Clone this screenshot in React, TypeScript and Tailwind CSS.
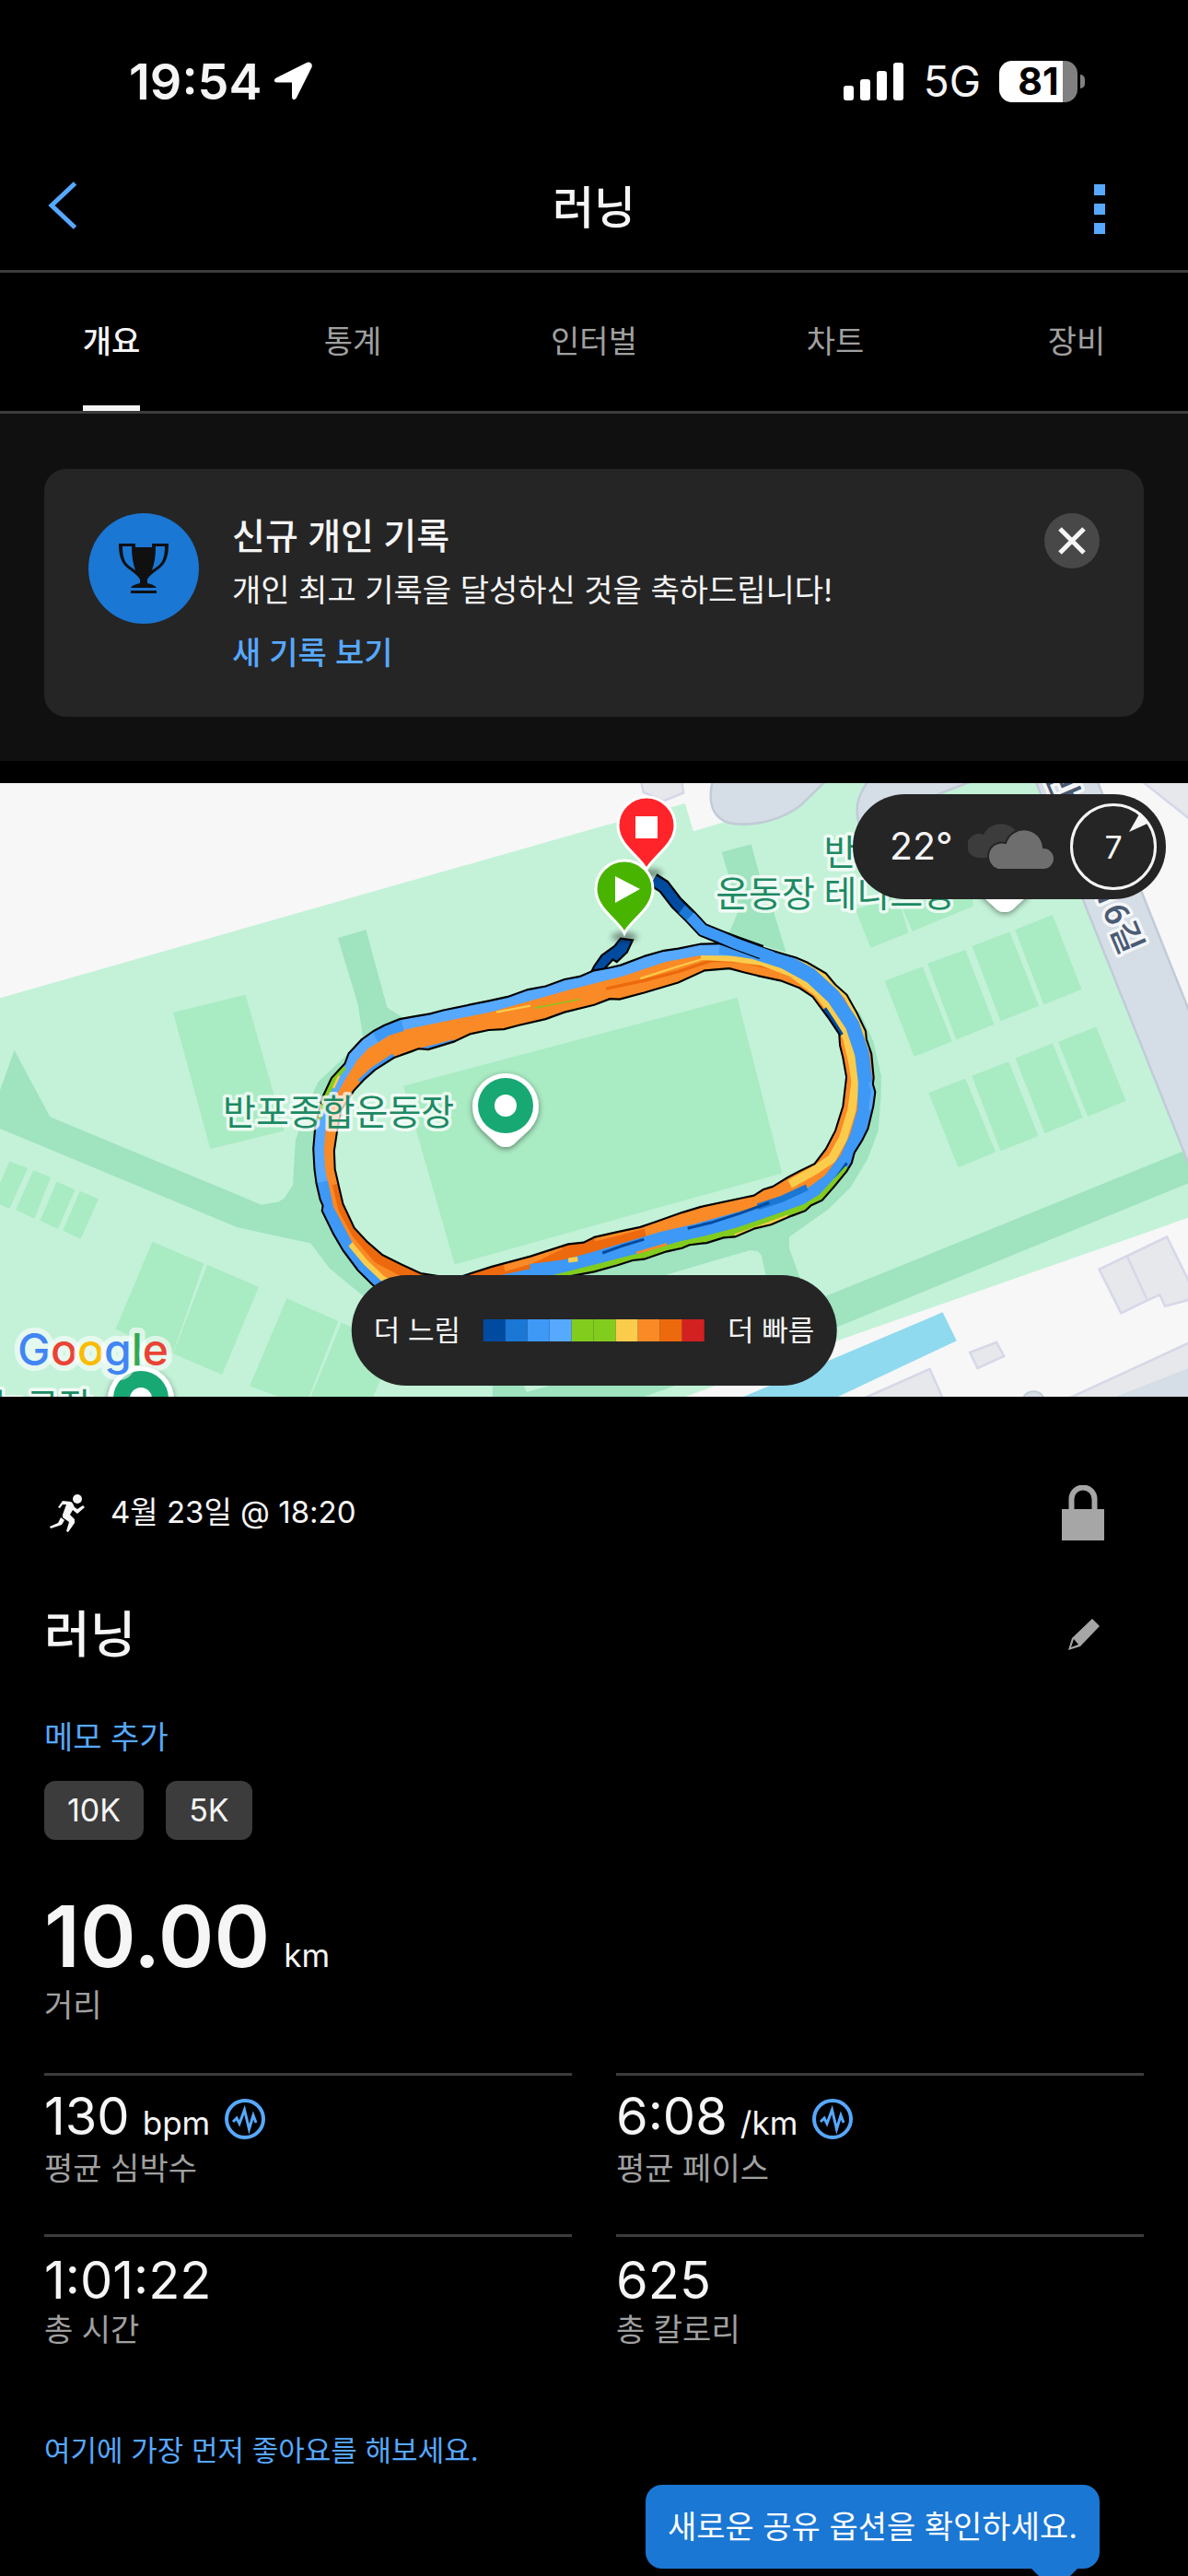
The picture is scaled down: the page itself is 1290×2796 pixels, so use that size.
import type { ReactNode } from "react";

const OUTER =
  "M1055 605 L1085 600 L1135 592 L1170 583 L1290 560 L1340 550 L1390 533 L1440 524 L1490 507 L1530 500 L1568 485 L1610 478 L1638 472 L1700 450 L1748 437 L1790 431 L1848 420 L1930 418 L1970 424 L2010 428 L2070 445 L2100 453 L2130 465 L2180 492 L2205 520 L2235 545 L2262 590 L2285 635 L2287 655 L2300 690 L2306 750 L2304 765 L2310 785 L2305 820 L2300 840 L2291 875 L2275 905 L2255 935 L2248 960 L2235 980 L2200 1020 L2170 1052 L2140 1065 L2125 1078 L2090 1090 L2035 1112 L1990 1122 L1940 1142 L1910 1144 L1865 1157 L1820 1162 L1800 1170 L1760 1178 L1700 1197 L1670 1200 L1630 1212 L1568 1228 L1500 1240 L1200 1320 L1100 1320 L985 1262 L945 1225 L905 1175 L880 1135 L850 1078 L852 1065 L845 1050 L835 1010 L830 975 L827 925 L832 870 L850 800 L875 750 L910 715 L920 690 L955 655 L985 635 L1015 620 Z";
const INNER =
  "M1085 685 L1105 678 L1130 680 L1200 660 L1240 642 L1290 632 L1330 630 L1370 620 L1440 605 L1490 588 L1568 570 L1610 555 L1635 556 L1700 540 L1790 515 L1860 485 L1925 480 L1965 490 L2000 498 L2060 510 L2110 528 L2145 550 L2185 600 L2215 642 L2217 670 L2225 700 L2234 748 L2225 820 L2205 880 L2180 925 L2150 962 L2110 980 L2080 995 L2040 1018 L2015 1025 L1990 1040 L1965 1045 L1850 1068 L1800 1082 L1730 1105 L1690 1118 L1630 1130 L1568 1143 L1540 1156 L1500 1160 L1400 1190 L1300 1215 L1200 1245 L1110 1232 L1060 1210 L1010 1187 L970 1155 L935 1120 L905 1060 L895 1020 L884 975 L882 930 L890 880 L900 830 L935 780 L960 755 L990 730 L1040 700 Z";

const LEFT_COURTS = [
  "457,589 648,545 750,880 555,925",
  "25,956 73,973 25,1073 0,1062 0,1010",
  "88,978 134,995 91,1097 42,1075",
  "150,1006 198,1026 153,1123 106,1102",
  "211,1029 260,1049 213,1147 166,1127",
  "402,1154 538,1208 455,1432 305,1370",
  "547,1211 683,1266 586,1482 457,1430",
  "757,1294 893,1350 806,1560 659,1510",
  "901,1354 1010,1395 1010,1480 975,1560 810,1560",
  "1065,770 1946,552 2064,985 1200,1210",
];

const RIGHT_COURTS = [
  "767,511 867,476 945,660 845,698",
  "880,468 980,434 1056,618 956,656",
  "998,425 1097,390 1174,573 1073,610",
  "1111,385 1210,348 1287,532 1187,569",
  "883,787 980,752 1060,933 961,971",
  "997,745 1094,710 1173,893 1073,930",
  "1112,701 1210,665 1290,848 1190,887",
  "1225,661 1325,624 1404,807 1303,845",
  "690,335 800,300 830,392 730,429",
  "808,320 1000,290 1000,327 840,388",
];

const LEGEND = [
  "bg-[#004b9f]",
  "bg-[#1a77d4]",
  "bg-[#3d98f6]",
  "bg-[#57a8ff]",
  "bg-[#82cc1e]",
  "bg-[#82cc1e]",
  "bg-[#fbcc4b]",
  "bg-[#fa8a26]",
  "bg-[#ec690d]",
  "bg-[#d32020]",
];

function PlacePin({ x, y }: { x: number; y: number }) {
  return (
    <g transform={`translate(${x} ${y})`}>
      <path
        d="M0 45 C-5 45 -8 43 -12 39 L-26 26 A36 36 0 1 1 26 26 L12 39 C8 43 5 45 0 45 Z"
        fill="#fff"
        filter="url(#pinShadow)"
      />
      <circle r="30" fill="#18a874" />
      <circle r="12" fill="#fff" />
    </g>
  );
}

function RouteMap() {
  const halo = {
    stroke: "#fff",
    strokeOpacity: 0.75,
    strokeWidth: 7,
    strokeLinejoin: "round" as const,
    paintOrder: "stroke",
  };
  return (
    <svg
      viewBox="0 0 1290 666"
      preserveAspectRatio="xMidYMid slice"
      className="block h-[666px] w-full"
      role="img"
      aria-label="러닝 경로 지도"
    >
      <defs>
        <filter id="pinShadow" x="-30%" y="-30%" width="160%" height="160%">
          <feDropShadow dx="0" dy="2" stdDeviation="3" floodColor="#000" floodOpacity="0.45" />
        </filter>
        <filter id="soft" x="-50%" y="-100%" width="200%" height="300%">
          <feGaussianBlur stdDeviation="3" />
        </filter>
        <clipPath id="band">
          <path d={`${OUTER} ${INNER}`} clipRule="evenodd" />
        </clipPath>
      </defs>
      <rect width="1290" height="666" fill="#f7f7f7" />
      <g transform="scale(0.4114 0.4401) translate(0 -23)">
        <polygon
          points="0,553 1568,135 1808,73 1830,142 1908,120 2100,23 2740,23 3136,945 3136,1095 2210,1398 1799,1540 0,1540"
          fill="#c3f2d8"
        />
        <g fill="#9fe3bf">
          <polygon points="3120,932 3136,937 3136,1010 2210,1364 1690,1540 1300,1540 1300,1500 1378,1500 1390,1525 1900,1390 2180,1288" />
          <polygon points="0,780 38,682 132,846 690,1063 735,1056 750,1047 773,1015 780,905 805,830 840,760 925,685 1000,700 1000,1290 955,1285 870,1220 820,1158 625,1118 0,875" />
          <polygon points="892,405 966,385 1022,577 1085,615 960,660 945,570" />
          <polygon points="1905,193 1983,174 2010,268 2030,285 2045,350 2075,440 1920,400 1935,370 1948,340 1938,300" />
          <polygon points="2200,530 2270,590 2305,660 2326,745 2325,800 2318,880 2290,950 2245,1020 2185,1075 2083,1142 2083,1170 2110,1240 2180,1400 2060,1400 2010,1188 2000,1177 1980,1175 1760,1235 1300,1340 1100,1360 950,1280 1100,1200 2000,1000 2200,800" />
        </g>
        <path d={INNER} fill="#c3f2d8" />
        <g fill="#a9ebc3">
          {LEFT_COURTS.map((p) => (
            <polygon key={p} points={p} />
          ))}
        </g>
        <g transform="translate(1568 0)">
          <g fill="#a9ebc3">
            {RIGHT_COURTS.map((p) => (
              <polygon key={p} points={p} />
            ))}
          </g>
          <g fill="#d5dde6" stroke="#c1ccd6" strokeWidth="6">
            <path d="M315 10 C300 60 305 108 360 122 C430 132 500 110 545 78 L620 10 Z" />
            <path d="M730 10 C688 60 690 90 700 130 L860 68 L1020 10 Z" />
            <polygon points="1162,10 1325,10 1590,630 1590,1010" />
          </g>
          <g fill="#e6e8ec" stroke="#d6d8e8" strokeWidth="6">
            <polygon points="122,10 130,45 183,67 236,47 230,10" />
            <polygon points="1333,1222 1512,1142 1590,1290 1568,1298 1507,1313 1493,1285 1462,1298 1391,1330" />
            <path d="M1407 1190 L1460 1298" />
            <polygon points="992,1427 1062,1402 1082,1436 1012,1466" />
            <polygon points="700,1545 886,1468 925,1550" />
            <polygon points="1230,1550 1590,1395 1590,1550" />
            <polygon points="1435,10 1590,125 1590,10" />
          </g>
          <polygon points="1340,1550 1590,1458 1590,1550" fill="#d5dde6" />
          <ellipse cx="1160" cy="1545" rx="28" ry="22" fill="#d5dde6" stroke="#c1ccd6" strokeWidth="4" />
          <polygon points="920,1328 957,1398 645,1536 620,1550 360,1550" fill="#8fdaef" />
        </g>
        <path
          d="M1550 510 L1568 475 L1588 448 L1622 425 L1638 406 L1670 410 L1655 440 L1628 464 L1618 458 L1598 478 L1592 500 Z"
          fill="#004b9f"
          stroke="#000"
          strokeWidth="5"
        />
        <g clipPath="url(#band)" fill="none" strokeLinejoin="round">
          <rect x="800" y="380" width="1550" height="980" fill="#fa8a26" />
          <path d="M1060 698 L1100 686 L1200 662 M950 760 L985 730 L1040 696" stroke="#3d98f6" strokeWidth="14" />
          <path d="M1200 1245 L1300 1215 L1400 1190 L1500 1165 L1568 1150 L1700 1118" stroke="#ec690d" strokeWidth="60" />
          <path d="M1568 1140 L1640 1124 L1720 1104 M1480 1160 L1400 1196 L1330 1215" stroke="#fa8a26" strokeWidth="26" />
          <path d="M895 1010 L910 1070 L945 1130 L1000 1190 L1110 1245" stroke="#ec690d" strokeWidth="36" />
          <path d="M1600 530 L1700 510 L1790 488 L1880 460 L1960 462 L2040 480" stroke="#ec690d" strokeWidth="8" />
          <path
            d="M1850 448 L1930 452 L2010 462 L2090 490 L2160 540 L2200 590 L2235 650 L2250 710 L2258 760 L2248 830 L2225 900 L2195 950 L2150 978 L2085 1012"
            stroke="#fbcc4b"
            strokeWidth="22"
          />
          <path d="M1690 505 L1780 478 L1850 458 M1310 588 L1400 572" stroke="#fbcc4b" strokeWidth="5" />
          <path d="M1410 578 L1530 556" stroke="#82cc1e" strokeWidth="3" />
          <path d="M2175 580 L2195 608 L2220 645" stroke="#004b9f" strokeWidth="14" />
          <path d="M2040 445 L2130 465 L2180 490 L2240 545 L2286 635 L2300 680" stroke="#fbcc4b" strokeWidth="26" />
          <path
            d="M1010 1290 L945 1225 L905 1175 L850 1078 L830 975 L827 925 L832 870 L850 800 L890 735 L920 690 L955 655 L1015 620 L1055 605 L1290 560 L1490 507 L1638 472 L1748 437 L1848 420 L1950 421"
            stroke="#57a8ff"
            strokeWidth="56"
          />
          <path d="M1010 1290 L945 1225 L905 1175 L850 1078 L835 1010" stroke="#3d98f6" strokeWidth="62" />
          <path d="M925 1160 L965 1205 L1010 1245 L1040 1262" stroke="#fbcc4b" strokeWidth="14" />
          <path d="M985 640 L1015 622 L1060 610" stroke="#3d98f6" strokeWidth="50" />
          <path d="M836 850 L852 800 L880 750 L905 720" stroke="#82cc1e" strokeWidth="22" />
          <path d="M880 775 L895 745" stroke="#fbcc4b" strokeWidth="6" />
          <path
            d="M1900 425 L1990 438 L2070 462 L2140 498 L2200 550 L2250 620 L2275 690 L2284 760 L2282 830 L2262 895 L2235 950 L2190 1005 L2125 1050 L2030 1080 L1940 1102 L1840 1128 L1740 1150 L1640 1178 L1568 1198 L1400 1240 L1300 1260"
            stroke="#3d98f6"
            strokeWidth="38"
          />
          <path d="M1400 1222 L1500 1210 L1600 1200" stroke="#3d98f6" strokeWidth="26" />
          <path d="M2130 1020 L2060 1050 L2000 1068" stroke="#1a77d4" strokeWidth="16" />
          <path d="M2030 1058 L1950 1085 L1880 1106 L1815 1121 M1700 1148 L1640 1165 L1590 1182 M2235 960 L2205 1000" stroke="#004b9f" strokeWidth="7" />
          <path
            d="M2240 975 L2170 1046 L2125 1072 L2035 1102 L1940 1132 L1865 1150 L1800 1163 L1700 1190 L1568 1222 L1450 1250"
            stroke="#82cc1e"
            strokeWidth="22"
          />
          <path d="M2080 1092 L2030 1110 L1940 1140" stroke="#fbcc4b" strokeWidth="10" />
          <path d="M1760 1160 L1680 1182" stroke="#fa8a26" strokeWidth="6" />
          <path d="M1500 1200 L1525 1197" stroke="#fbcc4b" strokeWidth="12" />
          <path d="M2298 760 L2305 780 L2298 830" stroke="#57a8ff" strokeWidth="12" />
        </g>
        <path d={OUTER} fill="none" stroke="#000" strokeWidth="5" strokeLinejoin="round" />
        <path d={INNER} fill="none" stroke="#000" strokeWidth="5" strokeLinejoin="round" />
        <path d="M1725 262 L1752 278 L1785 318 L1820 350 L1855 385 L1900 402 L1945 418 L2010 440" fill="none" stroke="#000" strokeWidth="36" />
        <path d="M1725 262 L1752 278 L1785 318 L1808 340" fill="none" stroke="#004b9f" strokeWidth="26" />
        <path d="M1800 334 L1828 358" fill="none" stroke="#1a77d4" strokeWidth="26" />
        <path d="M1822 352 L1855 385 L1900 402 L1945 420 L2040 452" fill="none" stroke="#3d98f6" strokeWidth="27" />
      </g>
      <g className="font-['Roboto','Noto_Sans_CJK_KR',sans-serif] text-[39px]" fill="#1d8a63" {...halo}>
        <text x="242" y="371">반포종합운동장</text>
        <text x="1038" y="89" textAnchor="end">반포종합</text>
        <text x="1038" y="134" textAnchor="end">운동장 테니스장</text>
        <text x="100" y="690" textAnchor="end">농구장</text>
      </g>
      <text
        transform="translate(1218 188) rotate(67)"
        textAnchor="end"
        fill="#4b5b74"
        className="font-['Roboto','Noto_Sans_CJK_KR',sans-serif] text-[37px] font-medium"
        {...halo}
      >
        반포대로16길
      </text>
      <PlacePin x={549} y={350} />
      <PlacePin x={153} y={668} />
      <PlacePin x={1091} y={95} />
      <text
        x="19"
        y="632"
        className="font-['Inter',sans-serif] text-[48px] font-medium"
        stroke="#fff"
        strokeOpacity="0.6"
        strokeWidth="12"
        strokeLinejoin="round"
        paintOrder="stroke"
      >
        <tspan fill="#4285f4">G</tspan>
        <tspan fill="#ea4335">o</tspan>
        <tspan fill="#fbbc05">o</tspan>
        <tspan fill="#4285f4">g</tspan>
        <tspan fill="#34a853">l</tspan>
        <tspan fill="#ea4335">e</tspan>
      </text>
      <ellipse cx="706" cy="98" rx="13" ry="5" fill="#000" opacity="0.4" filter="url(#soft)" />
      <path
        d="M702 94 C696 80 671 68 671 46 A31 31 0 1 1 733 46 C733 68 708 80 702 94 Z"
        fill="#ff2429"
        stroke="#fff"
        strokeWidth="3"
      />
      <rect x="690" y="36" width="24" height="24" fill="#fff" />
      <ellipse cx="678" cy="167" rx="14" ry="5" fill="#000" opacity="0.4" filter="url(#soft)" />
      <path
        d="M678 163 C672 149 647 137 647 115 A31 31 0 1 1 709 115 C709 137 684 149 678 163 Z"
        fill="#48b400"
        stroke="#fff"
        strokeWidth="3"
      />
      <path d="M668 101 L695 115 L668 130 Z" fill="#fff" />
    </svg>
  );
}

function PulseIcon() {
  return (
    <svg viewBox="0 0 44 44" className="size-11" fill="none" stroke="#57a8ff" aria-hidden="true">
      <circle cx="22" cy="22" r="20" strokeWidth="4" />
      <path d="M9 25 L13 21 L16 27 L21.500 12 L26.500 33 L31 18 L34 26" strokeWidth="3" />
    </svg>
  );
}

function Metric({ value, unit, label, pulse }: { value: string; unit?: string; label: string; pulse?: boolean }) {
  return (
    <div className="h-[175px] border-t-[3px] border-[#3c3c3c] pt-[17px]">
      <div className="flex h-[60px] items-center">
        <div className="flex items-baseline gap-3.5 leading-[60px]">
          <span className="text-[56px]">{value}</span>
          {unit && <span className="text-[35px]">{unit}</span>}
        </div>
        {pulse && (
          <button type="button" aria-label={`${label} 차트`} className="ml-4">
            <PulseIcon />
          </button>
        )}
      </div>
      <div className="text-[34px] leading-[48px] text-[#a0a0a0]">{label}</div>
    </div>
  );
}

function Tab({ children, active }: { children: ReactNode; active?: boolean }) {
  return (
    <button
      type="button"
      role="tab"
      aria-selected={!!active}
      className={
        active
          ? "flex w-32 justify-center font-medium text-[#f5f5f5]"
          : "flex w-32 justify-center text-[#a0a0a0]"
      }
    >
      <span className={active ? "h-[150px] border-b-[6px] border-[#f5f5f5] leading-[150px]" : "leading-[150px]"}>
        {children}
      </span>
    </button>
  );
}

function StatusBar() {
  return (
    <div className="flex h-[157px] items-center justify-between pt-[19px] pr-[112px] pl-[140px]">
      <div className="flex items-center gap-3">
        <span className="text-[54px] font-semibold">19:54</span>
        <svg viewBox="0 0 42 42" className="size-[42px]" fill="#fff" aria-hidden="true">
          <path d="M40.500 1.500 C42 3 42 4 41.500 6 L25 39 C23.500 42 20 42 20 38 L20 22.500 L4 22.500 C0 22.500 0 19 3 17.500 L36 1 C38 0 39.500 .5 40.500 1.500 Z" />
        </svg>
      </div>
      <div className="flex items-center">
        <svg viewBox="0 0 66 42" className="h-[42px] w-[66px]" fill="#fff" aria-hidden="true">
          <rect x="0" y="26" width="11" height="16" rx="3" />
          <rect x="18" y="19" width="11" height="23" rx="3" />
          <rect x="36" y="10" width="11" height="32" rx="3" />
          <rect x="54" y="1" width="11" height="41" rx="3" />
        </svg>
        <span className="ml-[21px] text-[46px]">5G</span>
        <div className="ml-[20px] flex items-center gap-[3px]">
          <div className="flex h-[45px] w-[85px] items-center justify-center rounded-[14px] bg-[linear-gradient(to_right,#fff_81%,#808080_81%)] text-[41px] leading-[45px] font-bold text-black">
            81
          </div>
          <div className="h-[15px] w-[5px] rounded-r-full bg-[#808080]" />
        </div>
      </div>
    </div>
  );
}

export default function App() {
  return (
    <main className="min-h-screen w-full overflow-hidden bg-black font-['Inter','Noto_Sans_CJK_KR',sans-serif] text-[#f5f5f5]">
      <StatusBar />
      <header className="grid h-[139px] grid-cols-[1fr_auto_1fr] items-center border-b-[3px] border-[#3c3c3c] px-[52px]">
        <button type="button" aria-label="뒤로" className="justify-self-start pb-1">
          <svg viewBox="0 0 32 52" className="h-[52px] w-8" fill="none" stroke="#57a8ff" strokeWidth="5" aria-hidden="true">
            <path d="M29.500 2 L4 26 L29.500 50" />
          </svg>
        </button>
        <h1 className="pt-0.5 text-[49px] font-medium">러닝</h1>
        <button type="button" aria-label="더 보기" className="mr-[38px] flex flex-col gap-[9px] justify-self-end pt-1">
          <span className="size-3 bg-[#57a8ff]" />
          <span className="size-3 bg-[#57a8ff]" />
          <span className="size-3 bg-[#57a8ff]" />
        </button>
      </header>
      <nav role="tablist" className="flex justify-between border-b-[3px] border-[#3c3c3c] px-[57px] text-[34px]">
        <Tab active>개요</Tab>
        <Tab>통계</Tab>
        <Tab>인터벌</Tab>
        <Tab>차트</Tab>
        <Tab>장비</Tab>
      </nav>

      <section className="bg-[#101010] px-12 pt-[60px] pb-12">
        <div className="flex rounded-3xl bg-[#252525] p-12">
          <div className="flex size-[120px] shrink-0 items-center justify-center rounded-full bg-[#1a77d4]">
            <svg viewBox="0 0 54 54" className="size-[54px]" fill="#101010" aria-hidden="true">
              <path
                fillRule="evenodd"
                d="M0 0 H18 V4 H36 V0 H54 C54 12 52 21 44 27 C37 32 33 35 31 39 V43 C36 44 40 46 41 48 H13 C14 46 18 44 23 43 V39 C21 35 17 32 10 27 C2 21 0 12 0 0 Z M4 3 C4 13 6 20 11 24 L18 29 C15 21 14 12 14 3 Z M50 3 C50 13 48 20 43 24 L36 29 C39 21 40 12 40 3 Z"
              />
              <rect x="13" y="51" width="28" height="3" />
            </svg>
          </div>
          <div className="ml-9 flex-1">
            <h2 className="text-[39px] leading-[50px] font-medium">신규 개인 기록</h2>
            <p className="mt-[9px] text-[34px] leading-[50px]">개인 최고 기록을 달성하신 것을 축하드립니다!</p>
            <a href="#records" className="mt-[19px] -mb-[3px] block text-[34px] leading-12 font-medium text-[#57a8ff]">
              새 기록 보기
            </a>
          </div>
          <button
            type="button"
            aria-label="닫기"
            className="flex size-[60px] items-center justify-center rounded-full bg-[#484848]"
          >
            <svg viewBox="0 0 30 30" className="size-[30px]" stroke="#f5f5f5" strokeWidth="5" aria-hidden="true">
              <path d="M2 2 L28 28 M28 2 L2 28" />
            </svg>
          </button>
        </div>
      </section>

      <section className="relative mt-6">
        <RouteMap />
        <div className="absolute top-3 right-6 flex h-[114px] w-[340px] items-center rounded-full bg-[#252525] pl-10">
          <span className="w-[85px] text-[41px]">22°</span>
          <svg viewBox="0 0 94 52" className="h-[52px] w-[94px]" aria-hidden="true">
            <path d="M13 38 A13 13 0 1 1 17 13 A20 18 0 0 1 54 12 L46 38 Z" fill="#3c3c3c" />
            <path
              d="M33 51 A15 15 0 1 1 41 22 A21 21 0 0 1 82 27 A12 12 0 0 1 82 51 Z"
              fill="#6e6e6e"
              stroke="#252525"
              strokeWidth="2"
            />
          </svg>
          <div className="relative ml-[17px] flex size-[94px] items-center justify-center rounded-full border-[3px] border-[#f5f5f5] text-[34px]">
            7
            <svg viewBox="0 0 22 22" className="absolute top-[7px] right-[5px] size-[22px]" fill="#f5f5f5" aria-hidden="true">
              <path d="M12 0 L22 11 L0 21 Z" />
            </svg>
          </div>
        </div>
        <div className="absolute bottom-3 left-1/2 flex h-[120px] -translate-x-1/2 items-center gap-[25px] rounded-full bg-[#252525] px-6 text-[31px] whitespace-nowrap">
          <span>더 느림</span>
          <div className="flex">
            {LEGEND.map((color, i) => (
              <span key={i} className={`size-6 ${color}`} />
            ))}
          </div>
          <span>더 빠름</span>
        </div>
      </section>

      <section className="px-12 pt-[92px]">
        <div className="flex h-[68px] items-center">
          <svg viewBox="0 0 40 42" className="ml-1.5 h-[42px] w-10" fill="#f5f5f5" aria-hidden="true">
            <circle cx="30" cy="6" r="5" />
            <path d="M14 8 L23 9 C25 10 25 11 27 15 L30 17 L36 13 L38 15 L30 22 L25 18 L22 23 L27 28 L27 32 L20 42 L18 41 L21 31 L14 26 L14 23 L18 12 L14 12 L11 16 L9 15 Z" />
            <path d="M12 26 L16 29 L13 34 L1 38 L0 36 L9 32 Z" />
          </svg>
          <span className="ml-[26px] text-[33px]">4월 23일 @ 18:20</span>
          <button type="button" aria-label="개인정보 설정" className="mr-[42px] ml-auto">
            <svg viewBox="0 0 48 60" className="h-[60px] w-12" aria-hidden="true">
              <path d="M11.500 28 V15 A12.500 12.500 0 0 1 36.500 15 V28" fill="none" stroke="#a6a6a6" strokeWidth="6" />
              <rect x="1" y="26" width="46" height="34" fill="#a6a6a6" />
            </svg>
          </button>
        </div>
        <div className="mt-[59px] flex h-[78px] items-center">
          <h2 className="text-[54px] font-medium">러닝</h2>
          <button type="button" aria-label="이름 편집" className="mr-12 ml-auto">
            <svg viewBox="0 0 34 34" className="size-[34px]" fill="#a6a6a6" aria-hidden="true">
              <path
                fillRule="evenodd"
                d="M26 0 L34 8 L13 30 L0 34 L4 21 Z M6 22 L3 31 L11 28 Z"
              />
            </svg>
          </button>
        </div>
        <a href="#memo" className="mt-12 block text-[34px] leading-[50px] text-[#57a8ff]">
          메모 추가
        </a>
        <div className="mt-[22px] flex gap-6 text-[34px] leading-16">
          <span className="rounded-xl bg-[#3c3c3c] px-[25px]">10K</span>
          <span className="rounded-xl bg-[#3c3c3c] px-[25px]">5K</span>
        </div>
        <div className="mt-[75px] flex items-baseline gap-[15px] leading-[60px]">
          <span className="text-[92px] font-semibold">10.00</span>
          <span className="text-[35px]">km</span>
        </div>
        <div className="text-[34px] leading-[50px] text-[#a0a0a0]">거리</div>
        <div className="mt-12 grid grid-cols-2 gap-x-12">
          <Metric value="130" unit="bpm" label="평균 심박수" pulse />
          <Metric value="6:08" unit="/km" label="평균 페이스" pulse />
          <Metric value="1:01:22" label="총 시간" />
          <Metric value="625" label="총 칼로리" />
        </div>
        <a href="#like" className="mt-[35px] block text-[31px] leading-[50px] text-[#57a8ff]">
          여기에 가장 먼저 좋아요를 해보세요.
        </a>
        <div className="mt-3 mr-12 flex flex-col items-end text-white">
          <div className="rounded-[18px] bg-[#1a77d4] px-6 text-[34px] leading-[91px]">
            새로운 공유 옵션을 확인하세요.
          </div>
          <svg viewBox="0 0 50 8" className="mr-6 h-2 w-[50px]" fill="#1a77d4" aria-hidden="true">
            <path d="M0 0 H50 L42 8 H8 Z" />
          </svg>
        </div>
      </section>
    </main>
  );
}
